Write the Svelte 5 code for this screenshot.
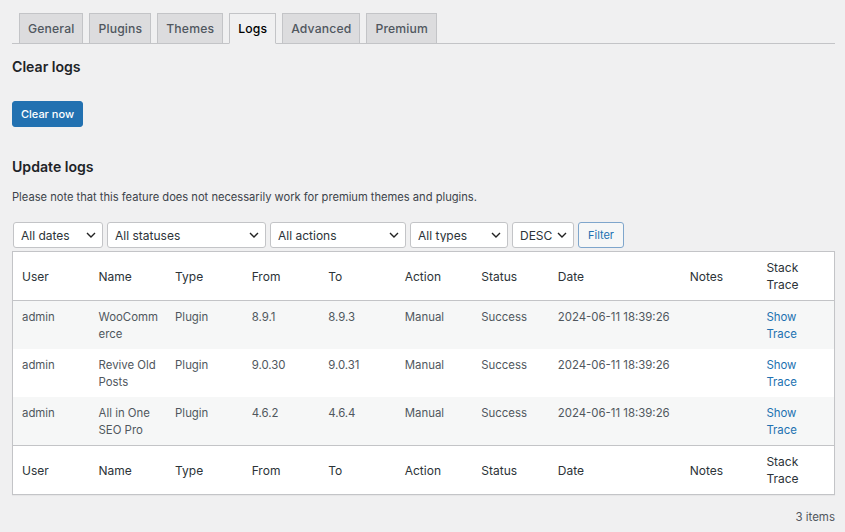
<script lang="ts">
  const tabs = ['General', 'Plugins', 'Themes', 'Logs', 'Advanced', 'Premium'];
  let activeTab = $state('Logs');

  const filters = [
    { label: 'All dates', width: 90 },
    { label: 'All statuses', width: 159 },
    { label: 'All actions', width: 136 },
    { label: 'All types', width: 98 },
    { label: 'DESC', width: 62 },
  ];

  const columns = ['User', 'Name', 'Type', 'From', 'To', 'Action', 'Status', 'Date', 'Notes', 'Stack Trace'];

  const rows = [
    { name: 'WooCommerce', from: '8.9.1', to: '8.9.3' },
    { name: 'Revive Old Posts', from: '9.0.30', to: '9.0.31' },
    { name: 'All in One SEO Pro', from: '4.6.2', to: '4.6.4' },
  ];
</script>

<div class="wrap">
  <nav class="tabs">
    {#each tabs as tab}
      <button class="tab" class:active={tab === activeTab} onclick={() => (activeTab = tab)}>{tab}</button>
    {/each}
  </nav>

  <h2 class="clear-title">Clear logs</h2>
  <button class="primary">Clear now</button>

  <h2 class="update-title">Update logs</h2>
  <p class="note">Please note that this feature does not necessarily work for premium themes and plugins.</p>

  <div class="filters">
    {#each filters as f}
      <select class="filter" style="width: {f.width}px">
        <option>{f.label}</option>
      </select>
    {/each}
    <button class="secondary">Filter</button>
  </div>

  <table class="logs">
    <colgroup>
      {#each columns as col}
        <col class:date-col={col === 'Date'} />
      {/each}
    </colgroup>
    <thead>
      <tr>
        {#each columns as col}
          <th>{col}</th>
        {/each}
      </tr>
    </thead>
    <tbody>
      {#each rows as row, i}
        <tr class:alt={i % 2 === 0}>
          <td>admin</td>
          <td>{row.name}</td>
          <td>Plugin</td>
          <td>{row.from}</td>
          <td>{row.to}</td>
          <td>Manual</td>
          <td>Success</td>
          <td>2024-06-11 18:39:26</td>
          <td></td>
          <td><a href="#trace">Show Trace</a></td>
        </tr>
      {/each}
    </tbody>
    <tfoot>
      <tr>
        {#each columns as col}
          <th>{col}</th>
        {/each}
      </tr>
    </tfoot>
  </table>

  <div class="count">3 items</div>
</div>

<style>
  :global(body) {
    background: #f0f0f1;
    font-family: Inter, "Liberation Sans", sans-serif;
    color: #3c434a;
  }

  .wrap {
    height: 532px;
    padding: 0 10px 0 12px;
    box-sizing: border-box;
    overflow: hidden;
  }

  .tabs {
    display: flex;
    gap: 6px;
    padding: 13px 0 0 7px;
    border-bottom: 1px solid #c3c4c7;
    height: 30px;
  }

  .tab {
    height: 31px;
    padding: 1px 8px 0;
    border: 1px solid #c3c4c7;
    background: #dcdcde;
    color: #50575e;
    font: 500 12.2px/1 Inter, sans-serif;
    letter-spacing: 0.15px;
    box-sizing: border-box;
  }

  .tab.active {
    background: #f0f0f1;
    border-bottom-color: #f0f0f1;
    color: #000;
  }

  h2 {
    margin: 0;
    font-size: 14.1px;
    line-height: 20px;
    font-weight: 600;
    color: #1d2327;
  }

  .clear-title {
    margin-top: 13px;
  }

  .primary {
    display: block;
    margin-top: 24px;
    width: 71px;
    height: 26px;
    padding: 1px 0 0;
    background: #2271b1;
    border: 1px solid #2271b1;
    border-radius: 3px;
    color: #fff;
    font: 500 11px/1 Inter, sans-serif;
  }

  .update-title {
    margin-top: 30px;
  }

  .note {
    margin: 12px 0 0;
    font-size: 11.15px;
    line-height: 17px;
    color: #3c434a;
  }

  .filters {
    display: flex;
    gap: 4px;
    margin-top: 16px;
    padding-left: 1px;
    height: 26px;
  }

  .filter {
    appearance: none;
    height: 26px;
    padding: 1px 20px 0 7px;
    background: #fff url("data:image/svg+xml,%3Csvg xmlns='http://www.w3.org/2000/svg' width='10' height='6'%3E%3Cpath d='M1 1l4 4 4-4' fill='none' stroke='%23222' stroke-width='1.4'/%3E%3C/svg%3E") no-repeat right 6px center;
    border: 1px solid #c3c4c7;
    border-radius: 3px;
    color: #2c3338;
    font: 400 12px/1 Inter, sans-serif;
    box-sizing: border-box;
  }

  .secondary {
    width: 46px;
    height: 26px;
    padding: 1px 0 0;
    background: #f6f7f7;
    border: 1px solid #7fa6cc;
    border-radius: 3px;
    color: #2271b1;
    font: 400 11px/1 Inter, sans-serif;
  }

  .logs {
    width: 823px;
    margin-top: 3px;
    border: 1px solid #c3c4c7;
    border-spacing: 0;
    border-collapse: separate;
    table-layout: fixed;
    background: #fff;
    box-shadow: 0 1px 1px rgba(0, 0, 0, 0.04);
  }

  .date-col {
    width: 132px;
  }

  th {
    padding: 7px 9px;
    font-size: 12px;
    line-height: 17px;
    font-weight: 400;
    text-align: left;
    color: #2c3338;
    height: 34px;
  }

  thead th {
    border-bottom: 1px solid #c3c4c7;
  }

  tfoot th {
    border-top: 1px solid #c3c4c7;
  }

  td {
    padding: 8px 6px 6px 9px;
    height: 34px;
    font-size: 11.4px;
    line-height: 17px;
    vertical-align: top;
    color: #50575e;
    overflow-wrap: anywhere;
  }

  tr.alt td {
    background: #f6f7f7;
  }

  a {
    color: #2271b1;
    text-decoration: none;
  }

  .count {
    margin-top: 14px;
    text-align: right;
    font-size: 11.5px;
    line-height: 17px;
    color: #50575e;
  }
</style>
